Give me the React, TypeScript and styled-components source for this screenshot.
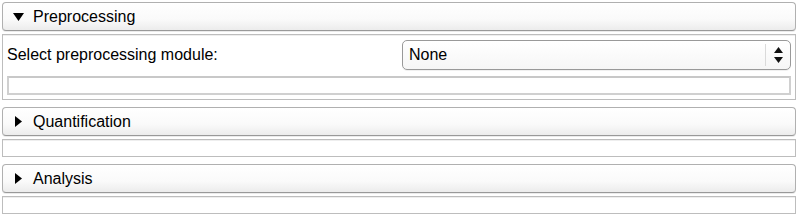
import styled, { createGlobalStyle } from 'styled-components';

const GlobalStyle = createGlobalStyle`
    body {
        margin: 0;
        background: #fff;
        font-family: "Liberation Sans", Arial, Helvetica, sans-serif;
        color: #000;
    }
`

const Page = styled.div`
    width: 799px;
    padding: 2px 3px 0 2px;
    box-sizing: border-box;
    display: flex;
    flex-direction: column;
    gap: 7px;
`

const Section = styled.div`
    display: flex;
    flex-direction: column;
    gap: 3px;
`

const Header = styled.div`
    height: 29px;
    box-sizing: border-box;
    display: flex;
    align-items: center;
    gap: 9px;
    padding-left: 9px;
    border: 1px solid #b0b0b0;
    border-bottom-color: #999;
    border-radius: 4px;
    background: linear-gradient(#ffffff, #fafafa 60%, #ececec);
    box-shadow: 0 1px 0 rgba(0, 0, 0, 0.08);
    font-size: 16px;
`

const Arrow = styled.span`
    width: 12px;
    height: 12px;
    display: flex;
    align-items: center;
    justify-content: center;
`

const Body = styled.div<{ $fill?: boolean }>`
    box-sizing: border-box;
    min-height: 18px;
    border: 1px solid #bdbdbd;
    box-shadow: inset 0 1px 0 #eeeeee;
    padding: ${p => (p.$fill ? '5px 4px 4px 3px' : '0')};
    display: flex;
    flex-direction: column;
    gap: 6px;
`

const Row = styled.div`
    display: flex;
    align-items: center;
`

const Label = styled.div`
    flex: 1;
    font-size: 16px;
    padding-left: 1px;
`

const Select = styled.div`
    flex: 0 0 389px;
    height: 30px;
    box-sizing: border-box;
    border: 1px solid #999;
    border-radius: 5px;
    background: linear-gradient(#ffffff, #f6f6f6);
    box-shadow: 0 1px 0 rgba(0, 0, 0, 0.06);
    display: flex;
    align-items: center;
    font-size: 16px;
`

const SelectText = styled.span`
    flex: 1;
    padding-left: 6px;
`

const Divider = styled.span`
    width: 1px;
    height: 22px;
    background: #dadada;
`

const Spinner = styled.span`
    width: 24px;
    display: flex;
    justify-content: center;
`

const Slot = styled.div`
    height: 19px;
    box-sizing: border-box;
    margin-left: 1px;
    border: 2px solid #d0d0d0;
    border-top-color: #c8c8c8;
    background: #fff;
`

function Triangle({ open }: { open: boolean }) {
    return (
        <Arrow>
            {open ? (
                <svg width="11" height="8" viewBox="0 0 11 8">
                    <polygon points="0,0 11,0 5.5,8" fill="#000" />
                </svg>
            ) : (
                <svg width="7" height="11" viewBox="0 0 7 11">
                    <polygon points="0,0 7,5.5 0,11" fill="#000" />
                </svg>
            )}
        </Arrow>
    );
}

export default function App() {
    return (
        <>
            <GlobalStyle />
            <Page>
                <Section>
                    <Header>
                        <Triangle open />
                        <span>Preprocessing</span>
                    </Header>
                    <Body $fill>
                        <Row>
                            <Label>Select preprocessing module:</Label>
                            <Select>
                                <SelectText>None</SelectText>
                                <Divider />
                                <Spinner>
                                    <svg width="9" height="16" viewBox="0 0 9 16">
                                        <polygon points="4.5,0 9,6 0,6" fill="#111" />
                                        <polygon points="0,10 9,10 4.5,16" fill="#111" />
                                    </svg>
                                </Spinner>
                            </Select>
                        </Row>
                        <Slot />
                    </Body>
                </Section>
                <Section>
                    <Header>
                        <Triangle open={false} />
                        <span>Quantification</span>
                    </Header>
                    <Body />
                </Section>
                <Section>
                    <Header>
                        <Triangle open={false} />
                        <span>Analysis</span>
                    </Header>
                    <Body />
                </Section>
            </Page>
        </>
    );
}
